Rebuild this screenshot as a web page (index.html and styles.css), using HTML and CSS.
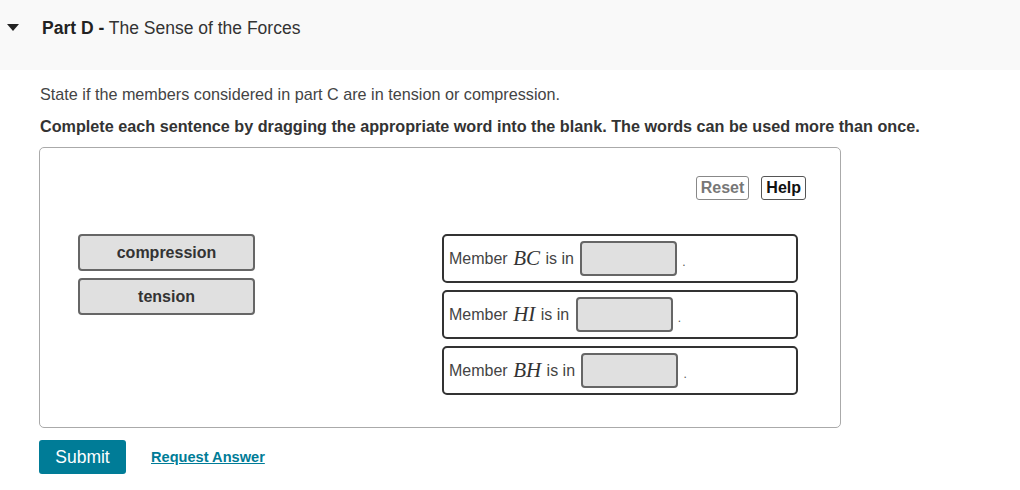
FILE: index.html
```html
<!DOCTYPE html>
<html>
<head>
<meta charset="utf-8">
<link rel="stylesheet" href="styles.css">
</head>
<body>
<div class="header">
  <span class="caret"></span>
  <h2 class="title"><b>Part D -</b> The Sense of the Forces</h2>
</div>
<div class="content">
  <p class="intro">State if the members considered in part C are in tension or compression.</p>
  <p class="instr">Complete each sentence by dragging the appropriate word into the blank. The words can be used more than once.</p>
  <div class="panel">
    <div class="tools">
      <button class="tool reset">Reset</button>
      <button class="tool help">Help</button>
    </div>
    <div class="work">
      <div class="words">
        <div class="word">compression</div>
        <div class="word">tension</div>
      </div>
      <div class="sentences">
        <div class="sentence">Member <span class="math">BC</span> is in <span class="blank"></span><span class="dot">.</span></div>
        <div class="sentence">Member <span class="math">HI</span> is in <span class="blank"></span><span class="dot">.</span></div>
        <div class="sentence">Member <span class="math">BH</span> is in <span class="blank"></span><span class="dot">.</span></div>
      </div>
    </div>
  </div>
  <div class="actions">
    <button class="submit">Submit</button>
    <a class="request" href="#">Request Answer</a>
  </div>
</div>
</body>
</html>
```
FILE: styles.css
```css
html, body { margin: 0; padding: 0; background: #fff; }
body { font-family: Arial, "Liberation Sans", sans-serif; color: #333; }
.header {
  height: 70px;
  background: #f9f9f9;
  display: flex;
  align-items: flex-start;
  position: relative;
}
.caret {
  position: absolute;
  left: 7px; top: 24px;
  width: 0; height: 0;
  border-left: 6px solid transparent;
  border-right: 6px solid transparent;
  border-top: 7px solid #222;
}
.title {
  margin: 18px 0 0 42px;
  font-size: 17.5px;
  font-weight: normal;
  color: #333;
  line-height: 20px;
}
.title b { color: #222; font-weight: bold; }
.content { padding: 0 0 0 39px; }
.intro { margin: 15px 0 0 1px; font-size: 16.2px; line-height: 18px; color: #444; }
.instr { margin: 14px 0 0 1px; font-size: 16.2px; line-height: 18px; font-weight: bold; color: #333; }
.panel {
  margin-top: 12px;
  width: 800px;
  height: 279px;
  border: 1px solid #aaa;
  border-radius: 5px;
}
.tools {
  display: flex;
  justify-content: flex-end;
  gap: 12px;
  padding: 28px 34px 0 0;
}
.tool {
  font-family: Arial, "Liberation Sans", sans-serif;
  font-size: 16px;
  font-weight: bold;
  background: #fff;
  border: 1px solid #555;
  border-radius: 3px;
  height: 24px;
  padding: 0 4px;
  line-height: 20px;
}
.reset { color: #777; border-color: #888; }
.help { color: #111; }
.work {
  display: flex;
  padding: 34px 0 0 38px;
}
.words { width: 177px; display: flex; flex-direction: column; gap: 7px; }
.word {
  height: 33px;
  background: #e0e0e0;
  border: 2px solid #666;
  border-radius: 4px;
  font-size: 16px;
  font-weight: bold;
  color: #333;
  text-align: center;
  line-height: 33px;
}
.sentences {
  margin-left: 187px;
  width: 356px;
  display: flex;
  flex-direction: column;
  gap: 7px;
}
.sentence {
  height: 45px;
  border: 2px solid #333;
  border-radius: 5px;
  display: flex;
  align-items: center;
  padding-left: 5px;
  font-size: 16px;
  color: #444;
  white-space: pre;
}
.math {
  font-family: "Liberation Serif", "Times New Roman", serif;
  font-style: italic;
  font-size: 21px;
  color: #333;
  padding: 0 1px;
}
.blank {
  display: inline-block;
  width: 93px;
  height: 31px;
  background: #e0e0e0;
  border: 2px solid #666;
  border-radius: 4px;
  margin-left: 2px;
}
.dot { margin-left: 5px; margin-top: 6px; font-size: 12px; color: #555; }
.actions {
  display: flex;
  align-items: center;
  margin-top: 12px;
  gap: 25px;
}
.submit {
  width: 87px;
  height: 34px;
  background: #007c97;
  color: #fff;
  border: none;
  border-radius: 3px;
  font-family: Arial, "Liberation Sans", sans-serif;
  font-size: 17.5px;
  padding: 0;
}
.request {
  color: #007c97;
  font-weight: bold;
  font-size: 14.6px;
  text-decoration: underline;
}
```
